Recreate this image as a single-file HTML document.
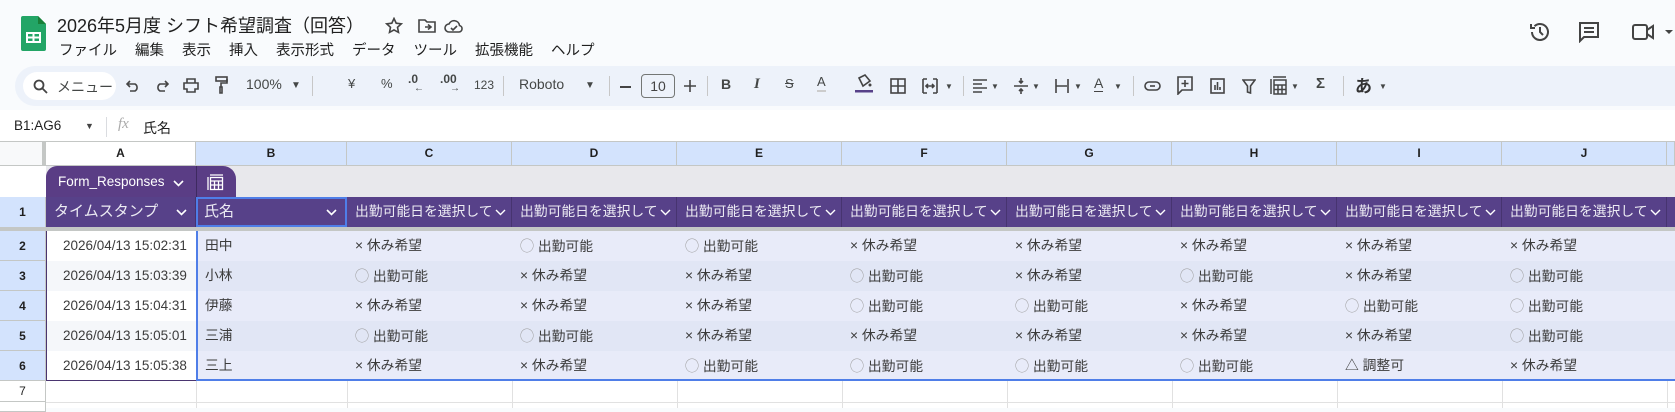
<!DOCTYPE html>
<html><head><meta charset="utf-8"><style>
*{margin:0;padding:0;box-sizing:border-box}
body{width:1675px;height:408px;overflow:hidden;background:#f9fbfd;font-family:"Liberation Sans","Noto Sans CJK JP",sans-serif;position:relative;color:#1f1f1f}
.a{position:absolute;white-space:nowrap}
.tb{font-size:14px;color:#444746;top:76px}
.ic{position:absolute}
.cell{position:absolute;font-size:13.8px;color:#3c3c3c;line-height:30px;white-space:nowrap;overflow:hidden}
.ts{font-size:13.5px}
.hd{position:absolute;top:142px;height:24px;background:#d3e3fd;border-right:1px solid #c4c7c5;border-bottom:1px solid #c4c7c5;font-size:12px;font-weight:bold;color:#1f1f1f;text-align:center;line-height:23px}
.rh{position:absolute;left:0;width:46px;background:#d3e3fd;border-bottom:1px solid #c4c7c5;border-right:1px solid #c4c7c5;font-size:12px;font-weight:bold;text-align:center}
.h1{position:absolute;top:197px;height:30px;background:#574189;color:#ecebf3;font-size:13.8px;line-height:30px;padding-left:8px;white-space:nowrap;overflow:hidden;border-right:1px solid #473470}
.h1 svg{margin-left:2px;vertical-align:middle}
.o{color:#9a9a9a;font-size:14px}
.m span{margin-right:18px}
</style></head><body>
<!-- logo -->
<svg class="ic" style="left:21px;top:16px" width="25" height="35" viewBox="0 0 25 35"><path d="M2 0h15l8 8v25a2 2 0 0 1-2 2H2a2 2 0 0 1-2-2V2a2 2 0 0 1 2-2z" fill="#23a566"/><path d="M17 0v8h8z" fill="#188038"/><rect x="5" y="16" width="15" height="11" fill="#fff"/><path d="M7 18h4.5v2.5H7zM13.5 18H18v2.5h-4.5zM7 22.5h4.5V25H7zM13.5 22.5H18V25h-4.5z" fill="#23a566"/></svg>
<div class="a" style="left:57px;top:12px;font-size:18px;color:#1f1f1f">2026年5月度 シフト希望調査（回答）</div>
<svg class="ic" style="left:385px;top:17px" width="18" height="18" viewBox="0 0 18 18" fill="none" stroke="#444" stroke-width="1.6"><path d="M9 1.5l2.2 4.7 5.1.6-3.8 3.5 1 5.1L9 12.9l-4.5 2.5 1-5.1-3.8-3.5 5.1-.6z"/></svg>
<svg class="ic" style="left:418px;top:18px" width="18" height="16" viewBox="0 0 18 16" fill="none" stroke="#444" stroke-width="1.6"><path d="M1 2h6l2 2h8v10H1z"/><path d="M7 9h6M10 6.5l3 2.5-3 2.5"/></svg>
<svg class="ic" style="left:444px;top:18px" width="20" height="15" viewBox="0 0 20 15" fill="none" stroke="#444" stroke-width="1.6"><path d="M5 14a4 4 0 0 1 0-8 5.5 5.5 0 0 1 10.5 1.5A3.3 3.3 0 0 1 15 14z"/><path d="M7 10l2 2 4-4"/></svg>
<div class="a m" style="left:59px;top:39px;font-size:14.5px;color:#1f1f1f"><span>ファイル</span><span>編集</span><span>表示</span><span>挿入</span><span>表示形式</span><span>データ</span><span>ツール</span><span>拡張機能</span><span>ヘルプ</span></div>
<!-- right icons -->
<svg class="ic" style="left:1528px;top:20px" width="24" height="24" viewBox="0 0 24 24" fill="none" stroke="#444" stroke-width="2"><path d="M4 12a8 8 0 1 0 2.5-5.8"/><path d="M3 4v4h4"/><path d="M12 7v5l3 3"/></svg>
<svg class="ic" style="left:1578px;top:21px" width="22" height="22" viewBox="0 0 22 22" fill="none" stroke="#444" stroke-width="2"><path d="M2 2h18v14H6l-4 4z" /><path d="M6 7h10M6 11h10" /></svg>
<svg class="ic" style="left:1632px;top:23px" width="43" height="18" viewBox="0 0 43 18" fill="none" stroke="#444" stroke-width="2"><rect x="1" y="2" width="14" height="14" rx="2"/><path d="M15 7l6-4v12l-6-4"/><path d="M33 7h8l-4 4z" fill="#444" stroke="none"/></svg>
<!-- toolbar -->
<div class="a" style="left:15px;top:66px;width:1660px;height:40px;background:#edf2fa;border-radius:20px 0 0 20px"></div>
<div class="a" style="left:23px;top:72px;width:93px;height:28px;background:#fff;border-radius:14px"></div>
<svg class="ic" style="left:33px;top:79px" width="15" height="15" viewBox="0 0 15 15" fill="none" stroke="#444" stroke-width="1.8"><circle cx="6" cy="6" r="4.5"/><path d="M9.5 9.5l4.5 4.5"/></svg>
<div class="a tb" style="left:57px;top:77px">メニュー</div>
<svg class="ic" style="left:126px;top:80px" width="14" height="12" viewBox="0 0 14 12" fill="none" stroke="#444" stroke-width="1.6"><path d="M4 1L1 4l3 3"/><path d="M1 4h8a4 4 0 0 1 0 7H4"/></svg>
<svg class="ic" style="left:155px;top:80px" width="14" height="12" viewBox="0 0 14 12" fill="none" stroke="#444" stroke-width="1.6"><path d="M10 1l3 3-3 3"/><path d="M13 4H5a4 4 0 0 0 0 7h5"/></svg>
<svg class="ic" style="left:183px;top:78px" width="16" height="15" viewBox="0 0 16 15" fill="none" stroke="#444" stroke-width="1.6"><path d="M4 5V1h8v4M1 5h14v6h-3v3H4v-3H1z"/></svg>
<svg class="ic" style="left:215px;top:76px" width="13" height="18" viewBox="0 0 13 18" fill="none" stroke="#444" stroke-width="1.6"><rect x="1" y="1" width="11" height="4"/><path d="M12 3v4H6v4M5 11h2v6H5z"/></svg>
<div class="a tb" style="left:246px">100%</div>
<div class="a tb" style="left:291px;font-size:10px;top:80px">▼</div>
<div class="a" style="left:312px;top:76px;width:1px;height:20px;background:#c7c7c7"></div>
<div class="a tb" style="left:348px;font-size:13px">¥</div>
<div class="a tb" style="left:381px;font-size:13px">%</div>
<div class="a tb" style="left:408px;font-size:12px;font-weight:bold;top:72px">.0<span style="position:absolute;left:6px;top:11px;font-size:10px">←</span></div>
<div class="a tb" style="left:440px;font-size:12px;font-weight:bold;top:72px">.00<span style="position:absolute;left:10px;top:11px;font-size:10px">→</span></div>
<div class="a tb" style="left:474px;font-size:12px;top:78px">123</div>
<div class="a" style="left:503px;top:76px;width:1px;height:20px;background:#c7c7c7"></div>
<div class="a tb" style="left:519px;font-size:14px">Roboto</div>
<div class="a tb" style="left:585px;font-size:10px;top:80px">▼</div>
<div class="a" style="left:609px;top:76px;width:1px;height:20px;background:#c7c7c7"></div>
<div class="a" style="left:620px;top:86px;width:11px;height:1.6px;background:#444"></div>
<div class="a" style="left:641px;top:74px;width:34px;height:24px;border:1px solid #747775;border-radius:4px;font-size:14px;color:#444;text-align:center;line-height:22px">10</div>
<svg class="ic" style="left:684px;top:80px" width="12" height="12" viewBox="0 0 12 12" stroke="#444" stroke-width="1.6"><path d="M6 0v12M0 6h12"/></svg>
<div class="a" style="left:707px;top:76px;width:1px;height:20px;background:#c7c7c7"></div>
<div class="a tb" style="left:721px;font-weight:bold;font-size:14px">B</div>
<div class="a tb" style="left:754px;font-style:italic;font-weight:bold;font-family:'Liberation Serif',serif;font-size:15px">I</div>
<div class="a tb" style="left:785px;text-decoration:line-through;font-size:13px">S</div>
<div class="a tb" style="left:817px;font-size:13px;top:74px;border-bottom:2px solid #ccc;line-height:16px">A</div>
<svg class="ic" style="left:855px;top:74px" width="18" height="20" viewBox="0 0 18 20"><path d="M4 4l6-3 5 6-7 5z" fill="none" stroke="#444" stroke-width="1.6"/><circle cx="15" cy="11" r="1.5" fill="#444"/><rect x="0" y="16" width="18" height="2.5" fill="#574189"/></svg>
<svg class="ic" style="left:890px;top:78px" width="16" height="16" viewBox="0 0 16 16" fill="none" stroke="#444" stroke-width="1.6"><rect x="1" y="1" width="14" height="14"/><path d="M8 1v14M1 8h14"/></svg>
<svg class="ic" style="left:922px;top:78px" width="16" height="16" viewBox="0 0 16 16" fill="none" stroke="#444" stroke-width="1.6"><path d="M1 1h4M11 1h4M1 15h4M11 15h4M1 1v14M15 1v14M4 8h8M6 6l-2 2 2 2M10 6l2 2-2 2"/></svg>
<div class="a tb" style="left:945px;font-size:8px;top:82px">▼</div>
<div class="a" style="left:963px;top:76px;width:1px;height:20px;background:#c7c7c7"></div>
<svg class="ic" style="left:973px;top:79px" width="14" height="14" viewBox="0 0 14 14" stroke="#444" stroke-width="1.6"><path d="M0 1h14M0 5h9M0 9h14M0 13h9"/></svg>
<div class="a tb" style="left:991px;font-size:8px;top:82px">▼</div>
<svg class="ic" style="left:1014px;top:77px" width="14" height="18" viewBox="0 0 14 18" stroke="#444" stroke-width="1.6" fill="none"><path d="M0 9h14M7 1v5M5 4l2 2 2-2M7 17v-5M5 14l2-2 2 2"/></svg>
<div class="a tb" style="left:1032px;font-size:8px;top:82px">▼</div>
<svg class="ic" style="left:1055px;top:78px" width="14" height="16" viewBox="0 0 14 16" stroke="#444" stroke-width="1.6" fill="none"><path d="M1 1v14M13 1v14M1 8h11"/></svg>
<div class="a tb" style="left:1074px;font-size:8px;top:82px">▼</div>
<div class="a tb" style="left:1094px;font-size:14px;top:75px;border-bottom:1.5px solid #444;line-height:16px">A</div>
<div class="a tb" style="left:1114px;font-size:8px;top:82px">▼</div>
<div class="a" style="left:1133px;top:76px;width:1px;height:20px;background:#c7c7c7"></div>
<svg class="ic" style="left:1144px;top:81px" width="17" height="10" viewBox="0 0 17 10" fill="none" stroke="#444" stroke-width="1.6"><rect x="1" y="1" width="15" height="8" rx="4"/><path d="M6 5h5"/></svg>
<svg class="ic" style="left:1177px;top:76px" width="16" height="19" viewBox="0 0 16 19" fill="none" stroke="#444" stroke-width="1.6"><path d="M1 1h14v13H5l-4 4z"/><path d="M8 4v7M4.5 7.5h7"/></svg>
<svg class="ic" style="left:1210px;top:78px" width="15" height="16" viewBox="0 0 15 16" fill="none" stroke="#444" stroke-width="1.6"><rect x="1" y="1" width="13" height="14"/><path d="M5 12V7M7.5 12V4M10 12V9"/></svg>
<svg class="ic" style="left:1242px;top:79px" width="14" height="15" viewBox="0 0 14 15" fill="none" stroke="#444" stroke-width="1.6"><path d="M1 1h12L8.5 7v7l-3-1V7z"/></svg>
<svg class="ic" style="left:1270px;top:76px" width="17" height="19" viewBox="0 0 17 19" fill="none" stroke="#444" stroke-width="1.5"><path d="M3 1h13M1 3v15"/><rect x="4" y="4" width="12" height="14"/><path d="M4 9h12M4 13.5h12M8 9v9M12 9v9"/></svg>
<div class="a tb" style="left:1291px;font-size:8px;top:82px">▼</div>
<div class="a tb" style="left:1316px;font-size:15px;top:75px;font-weight:bold">Σ</div>
<div class="a" style="left:1343px;top:76px;width:1px;height:20px;background:#c7c7c7"></div>
<div class="a tb" style="left:1355px;font-size:17px;top:72px;font-weight:bold;color:#333">あ</div>
<div class="a tb" style="left:1379px;font-size:8px;top:82px">▼</div>
<!-- formula bar -->
<div class="a" style="left:0;top:110px;width:1675px;height:32px;background:#fff;border-bottom:1px solid #c4c7c5"></div>
<div class="a" style="left:14px;top:118px;font-size:13.5px;color:#1f1f1f">B1:AG6</div>
<div class="a" style="left:85px;top:121px;font-size:9px;color:#444">▼</div>
<div class="a" style="left:106px;top:117px;width:1px;height:20px;background:#dadce0"></div>
<div class="a" style="left:118px;top:116px;font-size:15px;color:#aaa;font-style:italic;font-family:'Liberation Serif',serif">fx</div>
<div class="a" style="left:143px;top:118px;font-size:14px;color:#1f1f1f">氏名</div>
<!-- grid bg -->
<div class="a" style="left:0;top:142px;width:1675px;height:266px;background:#fff"></div>
<div class="a" style="left:0;top:142px;width:46px;height:24px;background:#f8f9fa;border-right:4px solid #c4c7c5;border-bottom:1px solid #c4c7c5"></div>
<div class="hd" style="left:46px;width:150px;background:#fff">A</div>
<div class="hd" style="left:196px;width:151px">B</div>
<div class="hd" style="left:347px;width:165px">C</div>
<div class="hd" style="left:512px;width:165px">D</div>
<div class="hd" style="left:677px;width:165px">E</div>
<div class="hd" style="left:842px;width:165px">F</div>
<div class="hd" style="left:1007px;width:165px">G</div>
<div class="hd" style="left:1172px;width:165px">H</div>
<div class="hd" style="left:1337px;width:165px">I</div>
<div class="hd" style="left:1502px;width:165px">J</div>
<div class="hd" style="left:1667px;width:8px"></div>
<!-- tab row -->
<div class="a" style="left:46px;top:166px;width:1629px;height:31px;background:#e8e8ec"></div>
<div class="a" style="left:46px;top:166px;width:190px;height:31px;background:#5a3d85;border-radius:11px 13px 0 0"></div>
<div class="a" style="left:196px;top:166px;width:1px;height:31px;background:#3e2a60"></div>
<div class="a" style="left:58px;top:174px;font-size:13.5px;color:#fff">Form_Responses</div>
<svg class="ic" style="left:173px;top:180px" width="11" height="7" viewBox="0 0 11 7" fill="none" stroke="#fff" stroke-width="1.6"><path d="M1 1l4.5 4.5L10 1"/></svg>
<svg class="ic" style="left:207px;top:174px" width="17" height="17" viewBox="0 0 17 17" fill="none" stroke="#fff" stroke-width="1.3"><path d="M3 1h13M1 3v13"/><rect x="3.5" y="3.5" width="12" height="12"/><path d="M3.5 7h12M3.5 11h12M7.5 7v8.5M11.5 7v8.5"/></svg>
<!-- row headers -->
<div class="rh" style="top:197px;height:31px;line-height:30px">1</div>
<div class="a" style="left:0;top:227px;width:1675px;height:4px;background:#c4c7c5"></div>
<div class="rh" style="top:231px;height:30px;line-height:30px">2</div>
<div class="rh" style="top:261px;height:30px;line-height:30px">3</div>
<div class="rh" style="top:291px;height:30px;line-height:30px">4</div>
<div class="rh" style="top:321px;height:30px;line-height:30px">5</div>
<div class="rh" style="top:351px;height:30px;line-height:30px">6</div>
<div class="rh" style="top:381px;height:21px;line-height:20px;background:#fff;font-weight:normal">7</div>
<div class="rh" style="top:402px;height:10px;background:#fff"></div>
<!-- header row 1 -->
<div class="h1" style="left:46px;width:150px;font-size:15px">タイムスタンプ</div>
<div class="h1" style="left:196px;width:151px;border:2px solid #4f7ee8;padding-left:6px;line-height:26px;font-size:15px">氏名</div>
<div class="h1" style="left:347px;width:165px">出勤可能日を選択して<svg width="11" height="7" viewBox="0 0 11 7" fill="none" stroke="#fff" stroke-width="1.4"><path d="M1 1l4.5 4.5L10 1"/></svg></div>
<div class="h1" style="left:512px;width:165px">出勤可能日を選択して<svg width="11" height="7" viewBox="0 0 11 7" fill="none" stroke="#fff" stroke-width="1.4"><path d="M1 1l4.5 4.5L10 1"/></svg></div>
<div class="h1" style="left:677px;width:165px">出勤可能日を選択して<svg width="11" height="7" viewBox="0 0 11 7" fill="none" stroke="#fff" stroke-width="1.4"><path d="M1 1l4.5 4.5L10 1"/></svg></div>
<div class="h1" style="left:842px;width:165px">出勤可能日を選択して<svg width="11" height="7" viewBox="0 0 11 7" fill="none" stroke="#fff" stroke-width="1.4"><path d="M1 1l4.5 4.5L10 1"/></svg></div>
<div class="h1" style="left:1007px;width:165px">出勤可能日を選択して<svg width="11" height="7" viewBox="0 0 11 7" fill="none" stroke="#fff" stroke-width="1.4"><path d="M1 1l4.5 4.5L10 1"/></svg></div>
<div class="h1" style="left:1172px;width:165px">出勤可能日を選択して<svg width="11" height="7" viewBox="0 0 11 7" fill="none" stroke="#fff" stroke-width="1.4"><path d="M1 1l4.5 4.5L10 1"/></svg></div>
<div class="h1" style="left:1337px;width:165px">出勤可能日を選択して<svg width="11" height="7" viewBox="0 0 11 7" fill="none" stroke="#fff" stroke-width="1.4"><path d="M1 1l4.5 4.5L10 1"/></svg></div>
<div class="h1" style="left:1502px;width:165px">出勤可能日を選択して<svg width="11" height="7" viewBox="0 0 11 7" fill="none" stroke="#fff" stroke-width="1.4"><path d="M1 1l4.5 4.5L10 1"/></svg></div>
<div class="h1" style="left:1667px;width:8px"></div>
<svg class="ic" style="left:176px;top:209px" width="11" height="7" viewBox="0 0 11 7" fill="none" stroke="#fff" stroke-width="1.6"><path d="M1 1l4.5 4.5L10 1"/></svg>
<svg class="ic" style="left:326px;top:209px" width="11" height="7" viewBox="0 0 11 7" fill="none" stroke="#fff" stroke-width="1.6"><path d="M1 1l4.5 4.5L10 1"/></svg>
<!-- data bands -->
<div class="a" style="left:46px;top:231px;width:1629px;height:30px;background:#e8ebf9"></div>
<div class="a" style="left:46px;top:261px;width:1629px;height:30px;background:#e1e6f5"></div>
<div class="a" style="left:46px;top:291px;width:1629px;height:30px;background:#e8ebf9"></div>
<div class="a" style="left:46px;top:321px;width:1629px;height:30px;background:#e1e6f5"></div>
<div class="a" style="left:46px;top:351px;width:1629px;height:30px;background:#e8ebf9"></div>
<div class="a" style="left:46px;top:231px;width:150px;height:30px;background:#fff"></div>
<div class="a" style="left:46px;top:261px;width:150px;height:30px;background:#f5f7fa"></div>
<div class="a" style="left:46px;top:291px;width:150px;height:30px;background:#fff"></div>
<div class="a" style="left:46px;top:321px;width:150px;height:30px;background:#f5f7fa"></div>
<div class="a" style="left:46px;top:351px;width:150px;height:30px;background:#fff"></div>
<div class="a" style="left:46px;top:231px;width:151px;height:150px;border-left:1.5px solid #4a3570;border-bottom:1.5px solid #4a3570"></div>
<div class="a" style="left:196px;top:231px;width:1479px;height:150px;border-left:2px solid #4f7ee8;border-bottom:2px solid #4f7ee8"></div>
<!-- empty grid lines -->
<div class="a" style="left:46px;top:402px;width:1629px;height:1px;background:#e1e1e1"></div>
<div class="a" style="left:196px;top:381px;width:1px;height:27px;background:#e1e1e1"></div>
<div class="a" style="left:347px;top:381px;width:1px;height:27px;background:#e1e1e1"></div>
<div class="a" style="left:512px;top:381px;width:1px;height:27px;background:#e1e1e1"></div>
<div class="a" style="left:677px;top:381px;width:1px;height:27px;background:#e1e1e1"></div>
<div class="a" style="left:842px;top:381px;width:1px;height:27px;background:#e1e1e1"></div>
<div class="a" style="left:1007px;top:381px;width:1px;height:27px;background:#e1e1e1"></div>
<div class="a" style="left:1172px;top:381px;width:1px;height:27px;background:#e1e1e1"></div>
<div class="a" style="left:1337px;top:381px;width:1px;height:27px;background:#e1e1e1"></div>
<div class="a" style="left:1502px;top:381px;width:1px;height:27px;background:#e1e1e1"></div>
<div class="a" style="left:1667px;top:381px;width:1px;height:27px;background:#e1e1e1"></div>
<!-- text -->
<div class="cell ts" style="left:63px;top:231px">2026/04/13 15:02:31</div>
<div class="cell ts" style="left:63px;top:261px">2026/04/13 15:03:39</div>
<div class="cell ts" style="left:63px;top:291px">2026/04/13 15:04:31</div>
<div class="cell ts" style="left:63px;top:321px">2026/04/13 15:05:01</div>
<div class="cell ts" style="left:63px;top:351px">2026/04/13 15:05:38</div>
<div class="cell" style="left:205px;top:231px">田中</div>
<div class="cell" style="left:205px;top:261px">小林</div>
<div class="cell" style="left:205px;top:291px">伊藤</div>
<div class="cell" style="left:205px;top:321px">三浦</div>
<div class="cell" style="left:205px;top:351px">三上</div>

<div class="cell" style="left:355px;top:231px">× 休み希望</div>
<div class="cell" style="left:520px;top:231px"><span class="o">◯</span> 出勤可能</div>
<div class="cell" style="left:685px;top:231px"><span class="o">◯</span> 出勤可能</div>
<div class="cell" style="left:850px;top:231px">× 休み希望</div>
<div class="cell" style="left:1015px;top:231px">× 休み希望</div>
<div class="cell" style="left:1180px;top:231px">× 休み希望</div>
<div class="cell" style="left:1345px;top:231px">× 休み希望</div>
<div class="cell" style="left:1510px;top:231px">× 休み希望</div>

<div class="cell" style="left:355px;top:261px"><span class="o">◯</span> 出勤可能</div>
<div class="cell" style="left:520px;top:261px">× 休み希望</div>
<div class="cell" style="left:685px;top:261px">× 休み希望</div>
<div class="cell" style="left:850px;top:261px"><span class="o">◯</span> 出勤可能</div>
<div class="cell" style="left:1015px;top:261px">× 休み希望</div>
<div class="cell" style="left:1180px;top:261px"><span class="o">◯</span> 出勤可能</div>
<div class="cell" style="left:1345px;top:261px">× 休み希望</div>
<div class="cell" style="left:1510px;top:261px"><span class="o">◯</span> 出勤可能</div>

<div class="cell" style="left:355px;top:291px">× 休み希望</div>
<div class="cell" style="left:520px;top:291px">× 休み希望</div>
<div class="cell" style="left:685px;top:291px">× 休み希望</div>
<div class="cell" style="left:850px;top:291px"><span class="o">◯</span> 出勤可能</div>
<div class="cell" style="left:1015px;top:291px"><span class="o">◯</span> 出勤可能</div>
<div class="cell" style="left:1180px;top:291px">× 休み希望</div>
<div class="cell" style="left:1345px;top:291px"><span class="o">◯</span> 出勤可能</div>
<div class="cell" style="left:1510px;top:291px"><span class="o">◯</span> 出勤可能</div>

<div class="cell" style="left:355px;top:321px"><span class="o">◯</span> 出勤可能</div>
<div class="cell" style="left:520px;top:321px"><span class="o">◯</span> 出勤可能</div>
<div class="cell" style="left:685px;top:321px">× 休み希望</div>
<div class="cell" style="left:850px;top:321px">× 休み希望</div>
<div class="cell" style="left:1015px;top:321px">× 休み希望</div>
<div class="cell" style="left:1180px;top:321px">× 休み希望</div>
<div class="cell" style="left:1345px;top:321px">× 休み希望</div>
<div class="cell" style="left:1510px;top:321px"><span class="o">◯</span> 出勤可能</div>

<div class="cell" style="left:355px;top:351px">× 休み希望</div>
<div class="cell" style="left:520px;top:351px">× 休み希望</div>
<div class="cell" style="left:685px;top:351px"><span class="o">◯</span> 出勤可能</div>
<div class="cell" style="left:850px;top:351px"><span class="o">◯</span> 出勤可能</div>
<div class="cell" style="left:1015px;top:351px"><span class="o">◯</span> 出勤可能</div>
<div class="cell" style="left:1180px;top:351px"><span class="o">◯</span> 出勤可能</div>
<div class="cell" style="left:1345px;top:351px">△ 調整可</div>
<div class="cell" style="left:1510px;top:351px">× 休み希望</div>
</body></html>
